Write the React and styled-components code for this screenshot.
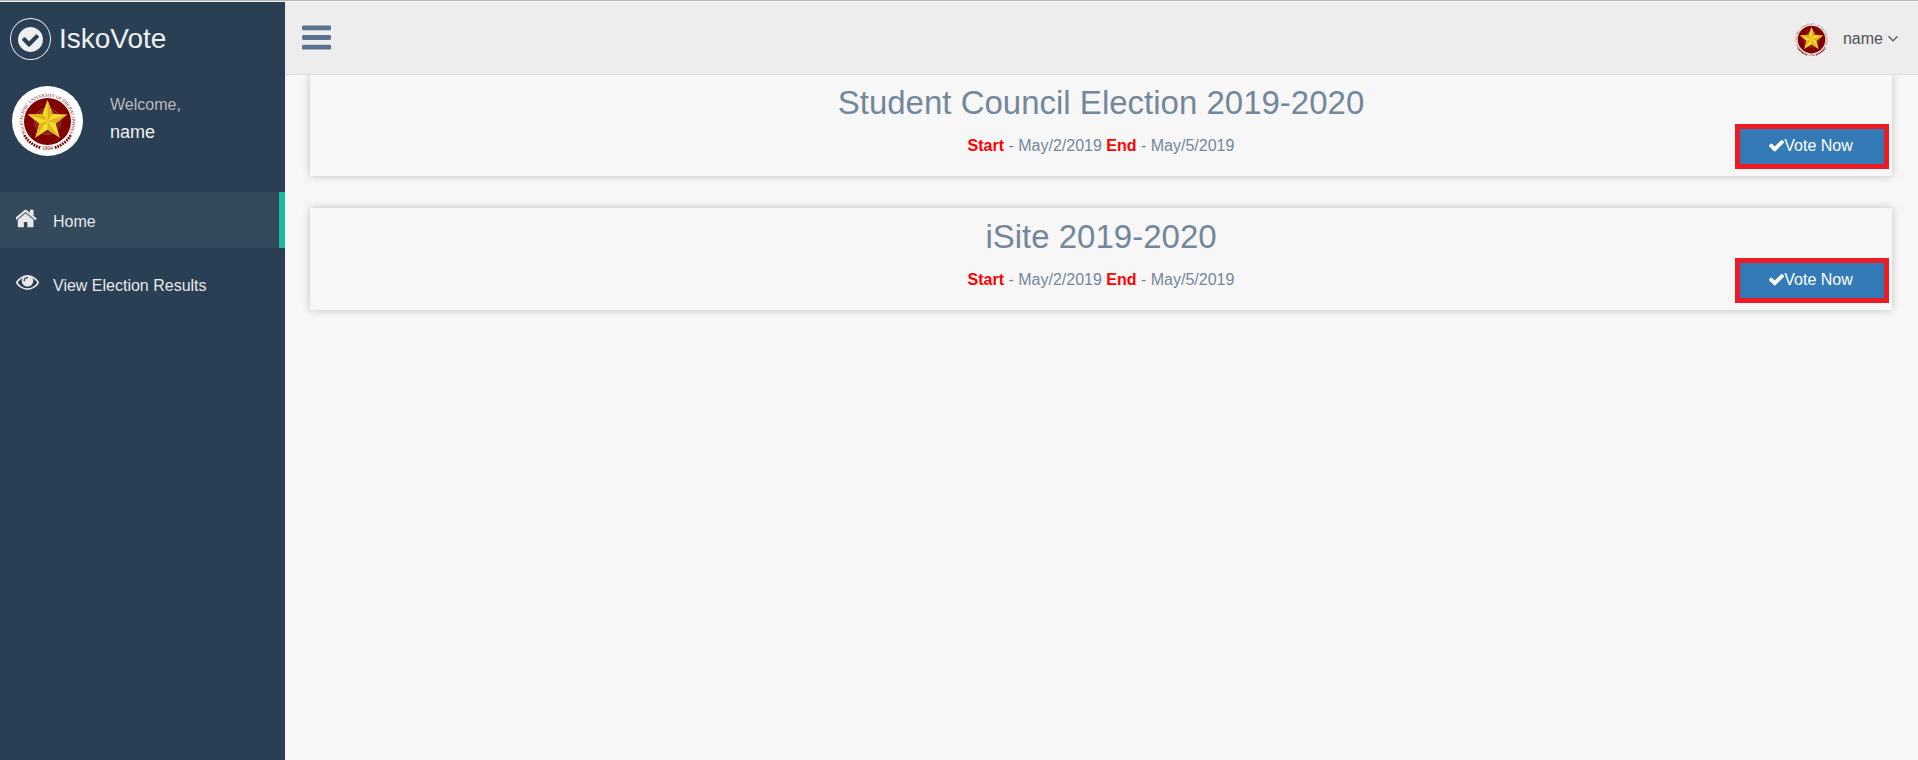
import React from "react";
import styled, { createGlobalStyle } from "styled-components";

const GlobalStyle = createGlobalStyle`
  *, *::before, *::after { box-sizing: border-box; }
  body {
    margin: 0;
    background: #f7f7f7;
    color: #73879c;
    font-family: "Liberation Sans", Arial, sans-serif;
    font-size: 16px;
    line-height: 24px;
  }
`;

const Page = styled.div`
  display: grid;
  grid-template-columns: 285px 1fr;
  min-height: 100vh;
  border-top: 1px solid #b4b4b6;
  padding-top: 1px;
`;

const Sidebar = styled.aside`
  background: #2a3f54;
  color: #ecf0f1;
`;

const Brand = styled.a`
  display: flex;
  align-items: center;
  gap: 8px;
  height: 74px;
  padding-left: 10px;
  color: #ecf0f1;
  font-size: 28px;
  text-decoration: none;
`;

const BrandBadge = styled.span`
  display: grid;
  place-items: center;
  width: 41px;
  height: 42px;
  border: 1px solid #eaeaea;
  border-radius: 50%;
`;

const Profile = styled.section`
  display: flex;
  align-items: center;
  gap: 27px;
  height: 90px;
  padding-left: 12px;
`;

const ProfilePicture = styled.span`
  display: grid;
  place-items: center;
  width: 71px;
  height: 70px;
  border-radius: 50%;
  background: #fff;
`;

const Greeting = styled.div`
  display: grid;
  gap: 3px;
  padding-bottom: 6px;
  color: #bab8b8;
`;

const UserName = styled.strong`
  color: #ecf0f1;
  font-size: 18px;
  font-weight: 400;
`;

const Menu = styled.nav`
  display: grid;
  gap: 8px;
  margin-top: 26px;
`;

const MenuLink = styled.a`
  display: grid;
  grid-template-columns: 24px 1fr;
  align-items: center;
  gap: 13px;
  height: 56px;
  padding: 4px 0 0 16px;
  color: #e7e7e7;
  text-decoration: none;
  background: ${(p) => (p.$active ? "#35495d" : "transparent")};
  border-right: 6px solid ${(p) => (p.$active ? "#1abb9c" : "transparent")};
  svg { margin-bottom: 8px; }
`;

const Main = styled.div`
  min-width: 0;
`;

const TopBar = styled.header`
  position: relative;
  z-index: 1;
  display: flex;
  justify-content: space-between;
  align-items: center;
  height: 73px;
  padding: 0 20px 0 17px;
  background: #ededed;
  border-bottom: 1px solid #d9dee4;
`;

const PlainButton = styled.button`
  display: flex;
  align-items: center;
  padding: 0;
  border: 0;
  background: none;
  font: inherit;
  cursor: pointer;
`;

const MenuToggle = styled(PlainButton)`
  padding-bottom: 2px;
  color: #5a738e;
`;

const AccountButton = styled(PlainButton)`
  padding-top: 2px;
  color: #515356;
`;

const AccountName = styled.span`
  margin: 0 5px 0 13px;
`;

const Elections = styled.main`
  display: grid;
  gap: 32px;
  margin-top: -1px;
  padding: 0 26px 0 25px;
`;

const Card = styled.article`
  display: grid;
  grid-template-columns: 1fr auto 1fr;
  background: #f7f7f7;
  box-shadow: 0 0 8px rgba(0, 0, 0, 0.22);
`;

const Summary = styled.div`
  grid-column: 2;
  padding: 10px 0 18px;
  text-align: center;
`;

const Title = styled.h2`
  margin: 0 0 12px;
  font-size: 33px;
  font-weight: 400;
  line-height: 38px;
`;

const Dates = styled.p`
  margin: 0;
  b { color: #f00; }
`;

const VoteButton = styled.button`
  display: flex;
  justify-content: center;
  align-items: center;
  justify-self: end;
  align-self: end;
  width: 154px;
  height: 45px;
  margin: 0 3px 7px 0;
  padding: 0 2px 2px 0;
  border: 5px solid #ed1c24;
  background: #337ab7;
  color: #fff;
  font: inherit;
  cursor: pointer;
`;

const icons = {
  home: {
    box: "128 128 1536 1536",
    d: "M1408 992v480q0 26-19 45t-45 19h-384v-384h-256v384h-384q-26 0-45-19t-19-45v-480q0-1 .5-3t.5-3l575-474 575 474q1 2 1 6zm223-69l-62 74q-8 9-21 11h-3q-13 0-21-7l-692-577-692 577q-12 8-24 7-13-2-21-11l-62-74q-8-10-7-23.5t11-21.5l719-599q32-26 76-26t76 26l244 204v-195q0-14 9-23t23-9h192q14 0 23 9t9 23v408l219 182q10 8 11 21.5t-7 23.5z",
  },
  eye: {
    box: "0 64 1792 1792",
    d: "M1664 960q-152-236-381-353 61 104 61 225 0 185-131.5 316.5t-316.5 131.5-316.5-131.5-131.5-316.5q0-121 61-225-229 117-381 353 133 205 333.5 326.5t434.5 121.5 434.5-121.5 333.5-326.5zm-720-384q0-20-14-34t-34-14q-125 0-214.5 89.5t-89.5 214.5q0 20 14 34t34 14 34-14 14-34q0-86 61-147t147-61q20 0 34-14t14-34zm848 384q0 34-20 69-140 230-376.5 368.5t-499.5 138.5-499.5-139-376.5-368q-20-35-20-69t20-69q140-229 376.5-368t499.5-139 499.5 139 376.5 368q20 35 20 69z",
  },
  check: {
    box: "121 128 1550 1550",
    d: "M1671 566q0 40-28 68l-724 724-136 136q-28 28-68 28t-68-28l-136-136-362-362q-28-28-28-68t28-68l136-136q28-28 68-28t68 28l294 295 656-657q28-28 68-28t68 28l136 136q28 28 28 68z",
  },
  checkCircle: {
    box: "128 128 1536 1536",
    d: "M1412 734q0-28-18-46l-91-90q-19-19-45-19t-45 19l-408 407-226-226q-19-19-45-19t-45 19l-91 90q-18 18-18 46 0 27 18 45l362 362q19 19 45 19 27 0 46-19l543-543q18-18 18-45zm252 162q0 209-103 385.5t-279.5 279.5-385.5 103-385.5-103-279.5-279.5-103-385.5 103-385.5 279.5-279.5 385.5-103 385.5 103 279.5 279.5 103 385.5z",
  },
  bars: {
    box: "128 128 1536 1536",
    d: "M1664 1344v128q0 26-19 45t-45 19h-1408q-26 0-45-19t-19-45v-128q0-26 19-45t45-19h1408q26 0 45 19t19 45zm0-512v128q0 26-19 45t-45 19h-1408q-26 0-45-19t-19-45v-128q0-26 19-45t45-19h1408q26 0 45 19t19 45zm0-512v128q0 26-19 45t-45 19h-1408q-26 0-45-19t-19-45v-128q0-26 19-45t45-19h1408q26 0 45 19t19 45z",
  },
  angleDown: {
    box: "384 448 1024 1024",
    d: "M1395 736q0 13-10 23l-466 466q-10 10-23 10t-23-10l-466-466q-10-10-10-23t10-23l50-50q10-10 23-10t23 10l393 393 393-393q10-10 23-10t23 10l50 50q10 10 10 23z",
  },
};

function Icon({ name, size }) {
  return (
    <svg width={size} height={size} viewBox={icons[name].box} fill="currentColor" aria-hidden="true">
      <path d={icons[name].d} />
    </svg>
  );
}

const starPoints = (outer, inner) =>
  Array.from({ length: 10 }, (_, i) => {
    const r = i % 2 ? inner : outer;
    const a = (Math.PI * i) / 5 - Math.PI / 2;
    return [100 + r * Math.cos(a), 98 + r * Math.sin(a)];
  });

function Seal({ size, id }) {
  const pts = starPoints(70, 29);
  return (
    <svg width={size} height={size} viewBox="-6 -6 212 212" role="img" aria-label="University seal">
      <defs>
        <path id={id} d="M26 137 A83 83 0 1 1 174 137" />
      </defs>
      <circle cx="100" cy="100" r="98" fill="#fff" fillOpacity="0.4" />
      <circle cx="100" cy="100" r="79" fill="#800000" />
      <g fill="none" stroke="#b98a5a" strokeWidth="2">
        <circle cx="100" cy="100" r="44" />
        <circle cx="100" cy="100" r="37" />
        <circle cx="100" cy="100" r="30" />
      </g>
      <polygon points={pts.map((p) => p.join(",")).join(" ")} fill="#f8dc2c" />
      {pts.map((p, i) => {
        const q = pts[(i + 1) % 10];
        return i % 2 === 0 ? (
          <polygon key={i} points={`100,98 ${p.join(",")} ${q.join(",")}`} fill="#e0b41c" />
        ) : null;
      })}
      <text fontFamily="Liberation Serif, serif" fontSize="15" fill="#800000">
        <textPath href={`#${id}`} startOffset="50%" textAnchor="middle">
          POLYTECHNIC UNIVERSITY OF THE PHILIPPINES
        </textPath>
      </text>
      <text x="100" y="197" textAnchor="middle" fontFamily="Liberation Serif, serif" fontSize="18" fill="#800000">
        1904
      </text>
      <g fill="none" stroke="#800000" strokeWidth="9" strokeDasharray="6 3">
        <path d="M22 146 A91 91 0 0 0 76 188" />
        <path d="M178 146 A91 91 0 0 1 124 188" />
      </g>
    </svg>
  );
}

const elections = [
  { title: "Student Council Election 2019-2020", start: "May/2/2019", end: "May/5/2019" },
  { title: "iSite 2019-2020", start: "May/2/2019", end: "May/5/2019" },
];

function ElectionCard({ title, start, end }) {
  return (
    <Card>
      <Summary>
        <Title>{title}</Title>
        <Dates>
          <b>Start</b> - {start} <b>End</b> - {end}
        </Dates>
      </Summary>
      <VoteButton type="button">
        <Icon name="check" size={15} />
        Vote Now
      </VoteButton>
    </Card>
  );
}

export default function App() {
  return (
    <>
      <GlobalStyle />
      <Page>
        <Sidebar>
          <Brand href="#home">
            <BrandBadge>
              <Icon name="checkCircle" size={25} />
            </BrandBadge>
            IskoVote
          </Brand>
          <Profile>
            <ProfilePicture>
              <Seal size={63} id="seal-arc-profile" />
            </ProfilePicture>
            <Greeting>
              <span>Welcome,</span>
              <UserName>name</UserName>
            </Greeting>
          </Profile>
          <Menu>
            <MenuLink href="#home" $active>
              <Icon name="home" size={21} />
              Home
            </MenuLink>
            <MenuLink href="#results">
              <Icon name="eye" size={23} />
              View Election Results
            </MenuLink>
          </Menu>
        </Sidebar>
        <Main>
          <TopBar>
            <MenuToggle type="button" aria-label="Toggle menu">
              <Icon name="bars" size={29} />
            </MenuToggle>
            <AccountButton type="button">
              <Seal size={37} id="seal-arc-account" />
              <AccountName>name</AccountName>
              <Icon name="angleDown" size={10} />
            </AccountButton>
          </TopBar>
          <Elections>
            {elections.map((e) => (
              <ElectionCard key={e.title} {...e} />
            ))}
          </Elections>
        </Main>
      </Page>
    </>
  );
}
